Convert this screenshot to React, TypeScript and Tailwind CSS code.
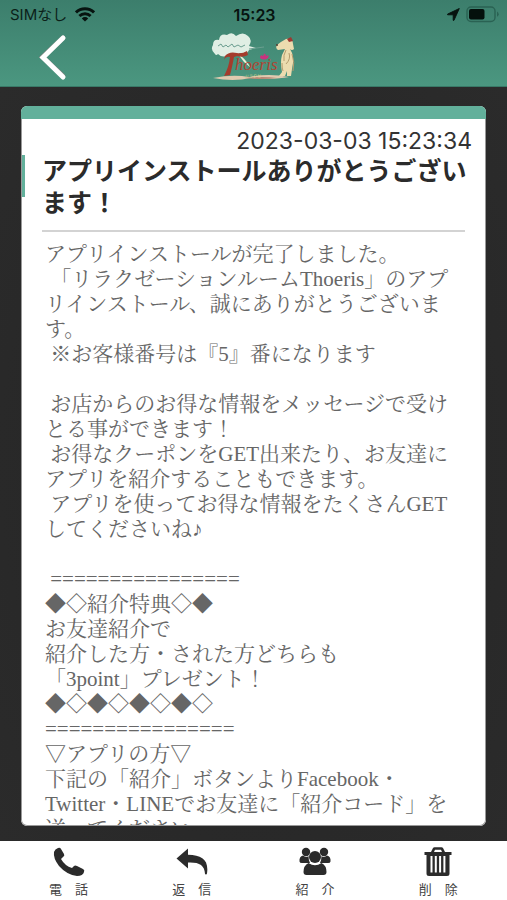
import React from "react";

const message = `アプリインストールが完了しました。
 「リラクゼーションルームThoeris」のアプリインストール、誠にありがとうございます。
 ※お客様番号は『5』番になります

 お店からのお得な情報をメッセージで受けとる事ができます！
 お得なクーポンをGET出来たり、お友達にアプリを紹介することもできます。
 アプリを使ってお得な情報をたくさんGETしてくださいね♪

 ================
◆◇紹介特典◇◆
お友達紹介で
紹介した方・された方どちらも
「3point」プレゼント！
◆◇◆◇◆◇◆◇
================
▽アプリの方▽
下記の「紹介」ボタンよりFacebook・Twitter・LINEでお友達に「紹介コード」を送ってください。`;

function WifiIcon() {
  return (
    <svg width="20" height="15" viewBox="0 0 20 15" aria-hidden="true">
      <g fill="none" stroke="#07130f" strokeWidth="2.9">
        <path d="M1 5.4a12.8 12.8 0 0 1 18 0" />
        <path d="M4.4 9a8 8 0 0 1 11.2 0" />
      </g>
      <path d="M10 14.6 6.8 11.4a4.6 4.6 0 0 1 6.4 0Z" fill="#07130f" />
    </svg>
  );
}

function StatusBar() {
  return (
    <div className="grid h-[29px] grid-cols-3 items-center pl-[10px] pr-2 text-[#0b1f19]">
      <div className="flex items-center gap-2 text-[15px] leading-5">
        <span>SIMなし</span>
        <WifiIcon />
      </div>
      <div className="text-center text-base font-semibold leading-5 text-[#07130f]">15:23</div>
      <div className="flex items-center justify-end gap-[6px]">
        <svg width="13" height="13" viewBox="0 0 13 13" aria-hidden="true">
          <path d="M12.3.5.6 6.1q-.6.5.2.7h5.4v5.4q.3.8.8.1Z" fill="#07130f" stroke="#07130f" strokeWidth=".9" />
        </svg>
        <svg width="33" height="17" viewBox="0 0 33 17" aria-hidden="true">
          <rect x="1" y="1" width="28" height="14.5" rx="4" fill="none" stroke="#2a6253" strokeWidth="1.4" />
          <rect x="3" y="3" width="15.5" height="10.5" rx="2" fill="#04100c" />
          <path d="M31 5.6q1.7 1 1.7 2.6T31 10.8Z" fill="#2a6253" />
        </svg>
      </div>
    </div>
  );
}

function Logo() {
  return (
    <svg width="86" height="50" viewBox="0 0 86 50" role="img" aria-label="Thoeris">
      <path
        d="M4 22Q-1 18 2 13 2 7 8 8 9 1 16 3 21-1 25 4 32-1 37 4 42 8 38 14l7 2-7 2Q36 23 29 21 24 25 20 22 12 27 7 22Q5 24 4 22Z"
        fill="#e0eee4"
      />
      <path d="m7 14 3-2 2 3 3-2 2 2 4-3 2 3 4-2 3 2 4-2m4 4 15-2" fill="none" stroke="#6b9e90" strokeWidth="1" />
      <path d="M27 22q6 3 13 14l-7-6Z" fill="#edf1d8" />
      <path d="M2 46q20-4 36-1 20-4 40 0-15 3-38 1-18 4-38 0Z" fill="#dfcbb0" />
      <path d="M33 46q20-2 33 0-14 2-33 0Z" fill="#b88876" />
      <path d="M14 24q4-5 12-3 5 1 10-2l1 4q-5 3-11 1l-3 1q-2 11-4 18l-6 1q5-9 6-19-4-1-6 3Z" fill="#a43c2c" />
      <text x="24" y="38" fill="#b04534" className="font-['Liberation_Serif',serif] text-[17px] italic">
        hoeris
      </text>
      <text x="34" y="46" fill="#d9d58b" className="font-['Noto_Sans_CJK_JP',sans-serif] text-[4px]">
        リラクゼ
      </text>
      <path d="M49 26q0-4 3-2 2-5 3 0 4-2 2 2-4 3-8 0Z" fill="#c8337e" />
      <path
        d="M66 13q5-4 9-6 7-1 7 5l1 5q-2 2-4 0 5 7 2 20l-1 7h-4v-5l-2 5h-6l3-4q-2-10 0-17l3-6-7 1q-3-2-1-5Z"
        fill="#eddcaf"
      />
      <path d="M75 18q-3 5-2 11m-2 2q0 6 1 8m6-18q2 6-3 11m6-10q3 8 1 17" fill="none" stroke="#b69c6e" strokeWidth="1" />
      <path d="m76 7 4-2 2 4-4 1Z" fill="#9d3931" />
      <circle cx="66" cy="13" r="1" fill="#523d31" />
    </svg>
  );
}

const actions = [
  {
    label: "電　話",
    icon: (
      <path d="M1 5Q2 2 5 1q2-1 3 1l3 5q1 2-1 3l-2 2q4 7 11 9l2-2q1-1 3 0l6 3q2 1 1 3-1 4-7 4Q14 28 6 19 0 11 1 5Z" />
    ),
  },
  {
    label: "返　信",
    icon: <path d="M.5 11.5 12 1.500v6.300c14 .2 21 5.200 19 18.700q-.7 2-2 .2C28.500 18 23 15 12 15.500v6Z" />,
  },
  {
    label: "紹　介",
    icon: (
      <g>
        <circle cx="7" cy="5" r="4.200" />
        <circle cx="25" cy="5" r="4.200" />
        <path d="M.5 14.500Q0 9.500 4 8.500q3 2.500 5.500.5 0 4 1.500 7H3q-2.300 0-2.500-1.500ZM31.500 14.500q.5-5-3.500-6-3 2.500-5.500.5 0 4-1.500 7h8q2.300 0 2.500-1.500Z" />
        <circle cx="16" cy="10" r="6" />
        <path d="M9.500 16q6.500 4.500 13 0 5 2.500 5 9 0 3-3 3h-17q-3 0-3-3 0-6.500 5-9Z" />
      </g>
    ),
  },
  {
    label: "削　除",
    icon: (
      <path
        fillRule="evenodd"
        d="M2.500 5H9l2-4q.5-.8 1.500-.8h7q1 0 1.500.8l2 4h6.500v3h-2v18.500q0 2.500-2.500 2.500H7q-2.500 0-2.500-2.500V8h-2ZM12 5h8l-1-2.300h-6ZM8.500 9v16.500h2V9Zm4.300 0v16.500h2V9Zm4.300 0v16.500h2V9ZM21.400 9v16.500h2V9Z"
      />
    ),
  },
];

export default function App() {
  return (
    <div className="flex h-screen flex-col bg-[#272727] font-['Inter','Noto_Sans_CJK_JP',sans-serif]">
      <header className="h-[87px] shrink-0 border-b border-[#397967] bg-linear-to-b from-[#3c7e6c] to-[#4b9780]">
        <StatusBar />
        <div className="grid grid-cols-3 items-center pt-[3px]">
          <button type="button" aria-label="戻る" className="ml-9 w-8">
            <svg width="32" height="48" viewBox="0 0 32 48" aria-hidden="true">
              <path d="M27 5 6.500 24 27 43" fill="none" stroke="#777f7c" strokeWidth="5" strokeLinecap="round" />
              <path d="M27 5 7 24.500 27 44" fill="none" stroke="#fff" strokeWidth="5" strokeLinecap="round" />
            </svg>
          </button>
          <div className="flex justify-center">
            <Logo />
          </div>
        </div>
      </header>

      <main className="flex min-h-0 flex-1 flex-col bg-radial from-[#242424] to-[#2b2b2b] px-[21px] pb-[15px] pt-[19px]">
        <article className="flex min-h-0 flex-1 flex-col overflow-hidden rounded-md bg-white">
          <div className="h-[13px] shrink-0 bg-[#62b09b]" />
          <div className="min-h-0 flex-1 overflow-hidden rounded-b-md border-x border-b border-[#999]">
            <time className="block pr-[13px] pt-2 text-right text-[23px] leading-7 text-[#333]">2023-03-03 15:23:34</time>
            <div className="flex items-start">
              <span className="h-[42px] w-[3px] shrink-0 bg-[#62b09b]" />
              <h1 className="ml-[17px] flex-1 text-[25px] font-bold leading-8 text-[#2b2b2b]">
                アプリインストールありがとうございます！
              </h1>
            </div>
            <hr className="mx-5 mt-[11px] border-t-2 border-[#d3d3d3]" />
            <p className="ml-[23px] mr-[26px] mt-[10px] whitespace-pre-wrap font-['Liberation_Serif','Noto_Serif_CJK_JP','Noto_Sans_CJK_JP',serif] text-[21px] leading-[25px] text-[#666]">
              {message}
            </p>
          </div>
        </article>
      </main>

      <nav className="grid h-[59px] shrink-0 grid-cols-4 bg-white px-[7px] pt-[6px]">
        {actions.map((action) => (
          <button key={action.label} type="button" className="flex flex-col items-center text-[#2b2b2b]">
            <svg width="32" height="30" viewBox="0 0 32 30" fill="currentColor" aria-hidden="true">
              {action.icon}
            </svg>
            <span className="mt-1 font-['Noto_Sans_CJK_JP',sans-serif] text-[13px] leading-4 text-[#444]">{action.label}</span>
          </button>
        ))}
      </nav>
    </div>
  );
}
